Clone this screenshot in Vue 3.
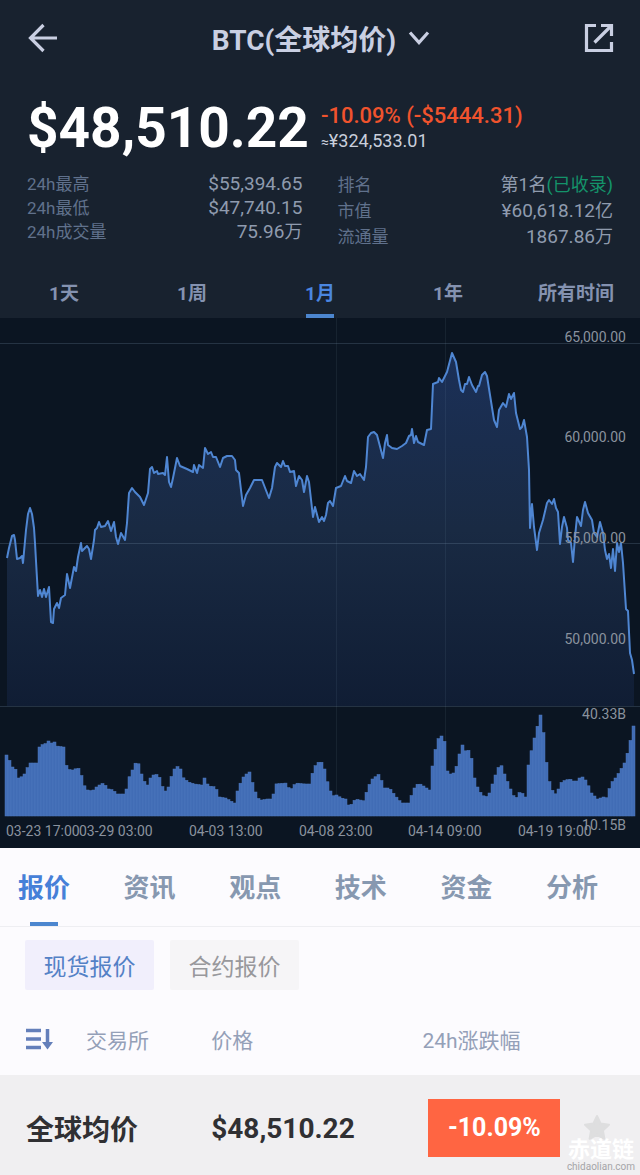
<template>
  <div class="page">
    <section class="top">
      <header class="bar">
        <button class="icon-btn" type="button" aria-label="返回">
          <svg width="30" height="30" viewBox="0 0 30 30">
            <path d="M29 15H3M15.500 2 2.500 15l13 13" fill="none" stroke="#c9cfe2" stroke-width="3.200" />
          </svg>
        </button>
        <button class="title" type="button">
          BTC(全球均价)
          <svg width="22" height="16" viewBox="0 0 22 16">
            <path d="M2 2.500 11 12.500 20 2.500" fill="none" stroke="#c9cfe2" stroke-width="3.200" />
          </svg>
        </button>
        <button class="icon-btn" type="button" aria-label="分享">
          <svg width="30" height="30" viewBox="0 0 30 30">
            <path d="M12 2.500H2.500v25h25V19" fill="none" stroke="#c9cfe2" stroke-width="3.200" />
            <path d="M17 2.500h10.500V13M27 3 10.500 19.500" fill="none" stroke="#c9cfe2" stroke-width="3.200" />
          </svg>
        </button>
      </header>

      <div class="price-row">
        <div class="price">$48,510.22</div>
        <div class="price-side">
          <div class="change">-10.09% (-$5444.31)</div>
          <div class="cny"><span class="approx">≈</span>¥324,533.01</div>
        </div>
      </div>

      <div class="stats">
        <dl v-for="(group, i) in stats" :key="i" :class="['stat-col', { wide: i === 1 }]">
          <div v-for="item in group" :key="item.label" class="stat">
            <dt>{{ item.label }}</dt>
            <dd>{{ item.value }}<span class="unit">{{ item.unit }}</span><span v-if="item.tag" class="tag">{{ item.tag }}</span></dd>
          </div>
        </dl>
      </div>

      <nav class="ranges">
        <button
          v-for="r in ranges"
          :key="r"
          type="button"
          :class="['range', { active: r === range }]"
          @click="range = r"
        >{{ r }}</button>
      </nav>
    </section>

    <svg class="chart" viewBox="0 0 640 530">
      <defs>
        <linearGradient id="area" x1="0" y1="0" x2="0" y2="1">
          <stop offset="0" stop-color="#1b3058" />
          <stop offset="0.5" stop-color="#192a43" />
          <stop offset="1" stop-color="#101d34" />
        </linearGradient>
      </defs>
      <polygon :points="areaPoints" fill="url(#area)" />
      <g stroke="#8fb0c8" stroke-opacity="0.2">
        <path d="M0 25.500H640M0 225.500H640M0 388.500H640" />
        <path d="M336.500 0V498M445.500 0V498" stroke-opacity="0.09" />
      </g>
      <polyline :points="linePoints" fill="none" stroke="#4f86d2" stroke-width="2" stroke-linejoin="round" />
      <rect
        v-for="bar in bars"
        :key="bar.x"
        :x="bar.x"
        :y="498 - bar.h"
        width="3"
        :height="bar.h"
        fill="#416cb5"
        stroke="#4e79be"
        stroke-width="0.5"
      />
      <g class="axis" text-anchor="end">
        <text v-for="l in yLabels" :key="l.text" x="626" :y="l.y">{{ l.text }}</text>
      </g>
      <g class="axis">
        <text v-for="l in xLabels" :key="l.text" :x="l.x" y="518">{{ l.text }}</text>
      </g>
    </svg>

    <nav class="tabs">
      <button
        v-for="t in tabs"
        :key="t"
        type="button"
        :class="['tab', { active: t === tab }]"
        @click="tab = t"
      >{{ t }}</button>
    </nav>

    <div class="pills">
      <button
        v-for="q in quotes"
        :key="q"
        type="button"
        :class="['pill', { active: q === quote }]"
        @click="quote = q"
      >{{ q }}</button>
    </div>

    <table class="quotes">
      <thead>
        <tr>
          <th class="c-name">
            <div class="name-head">
              <button class="sort" type="button" aria-label="排序">
                <svg width="27" height="22" viewBox="0 0 27 22">
                  <path d="M0 2.500H15M0 11H15M0 19.500H15" stroke="#647fba" stroke-width="3.500" />
                  <path d="M21.500 1V17" stroke="#647fba" stroke-width="3.500" />
                  <path d="M16 14h11l-5.500 7.500z" fill="#647fba" />
                </svg>
              </button>
              交易所
            </div>
          </th>
          <th class="c-price">价格</th>
          <th class="c-change">24h涨跌幅</th>
          <th class="c-star"></th>
        </tr>
      </thead>
      <tbody>
        <tr>
          <td class="c-name">全球均价</td>
          <td class="c-price">$48,510.22</td>
          <td class="c-change"><span class="badge">-10.09%</span></td>
          <td class="c-star">
            <button class="star" type="button" aria-label="收藏">
              <svg width="28" height="28" viewBox="0 0 28 28">
                <path
                  d="M14 2l3.700 7.600 8.300 1.100-6.100 5.800 1.500 8.300L14 20.800l-7.400 4 1.500-8.300L2 10.700l8.300-1.100z"
                  fill="#dededf"
                  stroke="#dededf"
                  stroke-width="2"
                  stroke-linejoin="round"
                />
              </svg>
            </button>
          </td>
        </tr>
      </tbody>
    </table>

    <div class="mark">
      <div class="mark-name">赤道链</div>
      <div class="mark-url">chidaolian.com</div>
    </div>
  </div>
</template>

<script setup>
import { ref } from 'vue'

const stats = [
  [
    { label: '24h最高', value: '$55,394.65' },
    { label: '24h最低', value: '$47,740.15' },
    { label: '24h成交量', value: '75.96', unit: '万' },
  ],
  [
    { label: '排名', unit: '第1名', tag: '(已收录)' },
    { label: '市值', value: '¥60,618.12', unit: '亿' },
    { label: '流通量', value: '1867.86', unit: '万' },
  ],
]

const ranges = ['1天', '1周', '1月', '1年', '所有时间']
const range = ref('1月')
const tabs = ['报价', '资讯', '观点', '技术', '资金', '分析']
const tab = ref('报价')
const quotes = ['现货报价', '合约报价']
const quote = ref('现货报价')

const yLabels = [
  { text: '65,000.00', y: 24 },
  { text: '60,000.00', y: 124 },
  { text: '55,000.00', y: 225 },
  { text: '50,000.00', y: 326 },
  { text: '40.33B', y: 401 },
  { text: '10.15B', y: 512 },
]
const xLabels = [
  { text: '03-23 17:00', x: 6 },
  { text: '03-29 03:00', x: 79 },
  { text: '04-03 13:00', x: 189 },
  { text: '04-08 23:00', x: 299 },
  { text: '04-14 09:00', x: 408 },
  { text: '04-19 19:00', x: 518 },
]

// price line, x,y in chart units
const linePoints = `7,240 9,230 12,218 14,217 15,222 17,241 20,240 22,238 23,245 24,234 26,212 28,196 30,190
32,196 34,210 35,225 36,243 38,278 40,272 42,279 44,271 46,279 49,269 51,304 53,305 54,291 57,285 59,290
61,280 65,277 67,256 70,270 74,249 76,253 78,239 81,225 82,233 87,228 89,231 91,241 94,222 95,212 97,210
99,204 101,209 105,208 108,203 111,213 114,204 116,219 118,226 121,215 125,222 127,205 129,175 132,170
135,174 140,179 144,187 148,175 150,151 152,149 154,155 157,153 158,156 163,155 165,157 167,139 169,164
171,169 173,160 177,140 180,148 187,151 193,154 194,147 197,155 199,147 203,150 205,130 208,136 211,134
213,139 216,139 220,149 223,140 227,138 232,138 235,142 236,152 239,155 241,172 243,188 246,177 250,170
254,162 262,162 269,180 272,170 275,149 277,145 281,149 283,143 285,148 288,148 290,154 294,153 296,168
299,158 302,162 304,174 307,158 309,164 313,199 315,189 319,204 322,199 324,203 326,197 328,185 330,183
333,188 336,170 341,168 345,158 347,163 351,165 354,153 357,158 360,156 364,162 366,149 368,119 371,115
374,114 377,117 383,140 385,125 387,117 388,127 392,130 397,131 402,128 406,125 409,118 411,117 412,111
414,125 416,118 418,124 424,127 427,112 431,111 433,66 438,64 439,60 442,64 447,54 452,35 456,44 459,62
461,72 463,74 465,66 467,66 469,59 472,67 476,74 478,68 479,68 482,57 485,54 487,58 490,77 494,102
497,109 499,92 503,85 506,89 509,76 511,81 514,75 516,95 520,111 522,109 524,102 527,119 529,152 530,210
532,186 534,209 537,232 539,215 543,202 547,185 549,182 552,186 554,181 556,190 558,194 560,226 562,209
564,199 567,210 568,222 571,225 573,244 575,219 577,199 581,208 583,192 585,184 588,195 592,202 594,215
597,219 600,204 603,215 605,232 607,241 609,236 611,250 613,231 615,253 617,225 619,234 621,225 623,245
626,291 628,293 630,335 632,342 634,356`

const areaPoints = `7,388 ${linePoints} 634,388`

// volume outline as [x, height], filled in with one bar every 3 units
const volume = [
  [6, 62], [8, 60], [13, 49], [17, 46], [19, 38], [24, 40], [27, 46], [30, 53], [37, 53], [39, 68],
  [42, 71], [48, 73], [50, 77], [52, 73], [55, 74], [57, 70], [64, 69], [66, 52], [71, 45], [75, 47],
  [81, 48], [83, 33], [88, 26], [93, 25], [98, 30], [104, 33], [109, 27], [114, 26], [117, 22],
  [126, 22], [129, 37], [133, 46], [135, 53], [140, 52], [143, 37], [148, 31], [151, 38], [155, 42],
  [159, 41], [162, 34], [164, 25], [168, 25], [171, 37], [175, 47], [180, 51], [183, 39], [189, 34],
  [195, 32], [202, 31], [205, 38], [209, 30], [216, 29], [220, 19], [226, 18], [235, 13], [238, 25],
  [243, 38], [248, 43], [250, 44], [254, 30], [258, 18], [262, 16], [268, 17], [273, 17], [276, 32],
  [287, 33], [290, 26], [293, 28], [296, 33], [305, 32], [311, 32], [314, 48], [321, 56], [325, 47],
  [329, 30], [333, 20], [337, 21], [342, 18], [346, 17], [350, 9], [356, 17], [365, 15], [368, 28],
  [373, 37], [381, 43], [383, 28], [390, 28], [396, 20], [402, 13], [409, 13], [415, 28], [419, 33],
  [424, 30], [430, 26], [433, 50], [437, 72], [440, 80], [443, 80], [446, 72], [448, 45], [452, 41],
  [456, 45], [459, 59], [463, 71], [465, 65], [471, 66], [474, 41], [479, 26], [485, 19], [489, 20],
  [493, 32], [497, 44], [501, 53], [505, 42], [509, 32], [513, 22], [516, 17], [521, 25], [526, 19],
  [529, 51], [533, 70], [537, 86], [541, 101], [543, 95], [546, 60], [551, 28], [557, 21], [561, 33],
  [566, 36], [573, 37], [575, 33], [579, 37], [582, 40], [587, 35], [592, 23], [598, 17], [604, 19],
  [608, 18], [611, 32], [616, 38], [620, 44], [625, 53], [629, 66], [634, 90],
]

const heightAt = (x) => {
  const i = volume.findIndex((p) => p[0] >= x)
  if (i <= 0) return volume[0][1]
  const [x0, h0] = volume[i - 1]
  const [x1, h1] = volume[i]
  return h0 + ((h1 - h0) * (x - x0)) / (x1 - x0)
}

const bars = []
for (let x = 5; x < 634; x += 3) {
  bars.push({ x, h: heightAt(Math.min(x + 2, 634)) })
}
</script>

<style>
body {
  margin: 0;
  background: #fcfbfe;
}
</style>

<style scoped>
.page {
  position: relative;
  font-family: Roboto, 'Noto Sans CJK SC', sans-serif;
  background: #fcfbfe;
}

button {
  padding: 0;
  border: 0;
  background: none;
  font: inherit;
  color: inherit;
  cursor: pointer;
}

svg {
  display: block;
}

.top {
  background: #18222f;
}

.bar {
  display: flex;
  align-items: center;
  justify-content: space-between;
  height: 76px;
  padding: 0 26px 0 28px;
}

.title {
  display: flex;
  align-items: center;
  gap: 12px;
  font-size: 28px;
  font-weight: 700;
  color: #c9cfe2;
}

.price-row {
  display: flex;
  align-items: center;
  gap: 12px;
  height: 96px;
  padding: 8px 27px 0;
  box-sizing: border-box;
}

.price {
  font-size: 55px;
  line-height: 80px;
  font-weight: 700;
  color: #fff;
}

.change {
  font-size: 22px;
  line-height: 26px;
  font-weight: 500;
  color: #f0532d;
}

.cny {
  font-size: 18px;
  line-height: 24px;
  color: #c9cfdc;
}

.approx {
  font-size: 14px;
}

.stats {
  display: flex;
  justify-content: space-between;
  height: 96px;
  padding: 0 27px;
}

.stat-col {
  width: 47%;
  margin: 0;
}

.stat {
  display: flex;
  justify-content: space-between;
  line-height: 24px;
}

.wide .stat {
  line-height: 26px;
}

.stat dt {
  font-size: 17px;
  color: #60718c;
}

.stat dd {
  margin: 0;
  font-size: 19px;
  color: #8f9bae;
}

.stat .unit,
.stat .tag {
  font-size: 18px;
}

.stat .tag {
  color: #14936a;
}

.ranges {
  display: grid;
  grid-template-columns: repeat(5, 1fr);
  height: 50px;
}

.range {
  position: relative;
  padding-bottom: 4px;
  font-size: 19px;
  font-weight: 700;
  color: #8492b0;
}

.range.active {
  color: #4a86e0;
}

.range.active::after,
.tab.active::after {
  content: '';
  position: absolute;
  left: 50%;
  bottom: 0;
  width: 28px;
  height: 4px;
  margin-left: -14px;
  background: #4c86cf;
}

.chart {
  width: 100%;
  background: #0b1522;
}

.axis {
  font-size: 14px;
  fill: #8a929e;
}

.tabs {
  display: flex;
  justify-content: space-between;
  height: 78px;
  padding: 0 42px 0 18px;
  border-bottom: 1px solid #eeeef2;
}

.tab {
  position: relative;
  padding-bottom: 4px;
  font-size: 26px;
  font-weight: 700;
  color: #8798b0;
}

.tab.active {
  color: #4680d8;
}

.pills {
  display: flex;
  gap: 16px;
  padding: 13px 25px;
}

.pill {
  width: 129px;
  height: 50px;
  border-radius: 2px;
  font-size: 23px;
  background: #f6f5f7;
  color: #98989c;
}

.pill.active {
  background: #f1effc;
  color: #5481c6;
}

.quotes {
  width: 100%;
  table-layout: fixed;
  border-collapse: collapse;
  text-align: left;
}

.quotes th,
.quotes td {
  padding: 0;
}

.quotes th {
  height: 72px;
  font-size: 21px;
  font-weight: 400;
  color: #94a0b8;
}

.quotes td {
  height: 94px;
  padding-top: 6px;
  background: #f0eff1;
  font-size: 28px;
  font-weight: 700;
  color: #303033;
}

.quotes .c-name {
  width: 33%;
  padding-left: 26px;
  box-sizing: border-box;
}

.quotes .c-price {
  width: 33%;
}

.quotes .c-change {
  width: 22%;
}

.quotes td.c-change {
  padding-left: 6px;
}

.name-head {
  display: flex;
  align-items: center;
  gap: 33px;
}

.badge {
  display: block;
  width: 132px;
  background: #ff6542;
  font-size: 25px;
  line-height: 58px;
  text-align: center;
  color: #fff;
}

.star {
  display: block;
  margin-left: 20px;
}

.mark {
  position: absolute;
  right: 5px;
  bottom: 2px;
  text-align: center;
}

.mark-name {
  font-size: 22px;
  line-height: 22px;
  font-weight: 700;
  color: #fff;
}

.mark-url {
  font-size: 10px;
  line-height: 12px;
  color: #a5a5a8;
}
</style>
